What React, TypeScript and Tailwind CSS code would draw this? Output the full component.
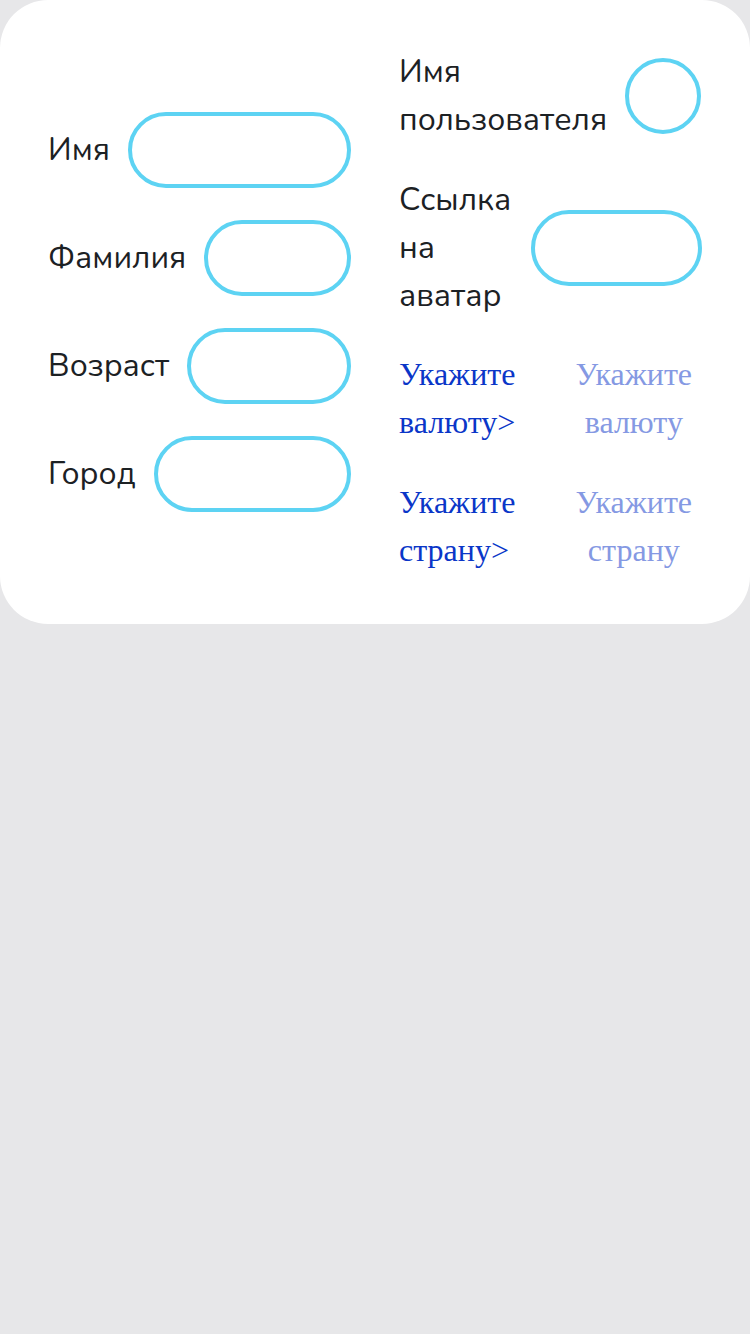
import React from "react";

const label = "text-[32px] leading-[48px] text-[#1c2124] font-['Nunito','Noto_Sans',sans-serif]";
const serif = "text-[32px] leading-[48px] font-['Liberation_Serif',serif]";

function Pill({ className = "" }: { className?: string }) {
  return <div className={"h-[76px] rounded-full border-4 border-[#5dd3f3] " + className} />;
}

export default function App() {
  return (
    <div className="min-h-[1334px] w-[750px] bg-[#e7e7e9]">
      <div className="grid grid-cols-2 gap-x-[48px] rounded-[48px] bg-white px-[48px] py-[48px]">
        <div className="flex flex-col justify-center gap-[32px]">
          {["Имя", "Фамилия", "Возраст", "Город"].map((t) => (
            <div key={t} className="flex items-center gap-[18px]">
              <span className={label}>{t}</span>
              <Pill className="flex-1" />
            </div>
          ))}
        </div>
        <div className="flex flex-col gap-[32px]">
          <div className="flex items-center gap-[18px]">
            <span className={label}>
              Имя
              <br />
              пользователя
            </span>
            <div className="h-[76px] w-[76px] rounded-full border-4 border-[#5dd3f3]" />
          </div>
          <div className="flex items-center gap-[18px]">
            <span className={label + " min-w-0 flex-1"}>Ссылка на аватар</span>
            <Pill className="w-[171px] shrink-0" />
          </div>
          <div className="flex items-start gap-[60px] -mt-[2px]">
            <span className={serif + " text-[#0a36c8]"}>
              Укажите
              <br />
              валюту&gt;
            </span>
            <span className={serif + " text-center text-[#8599e3]"}>
              Укажите
              <br />
              валюту
            </span>
          </div>
          <div className="flex items-start gap-[60px] mb-[2px]">
            <span className={serif + " text-[#0a36c8]"}>
              Укажите
              <br />
              страну&gt;
            </span>
            <span className={serif + " text-center text-[#8599e3]"}>
              Укажите
              <br />
              страну
            </span>
          </div>
        </div>
      </div>
    </div>
  );
}
